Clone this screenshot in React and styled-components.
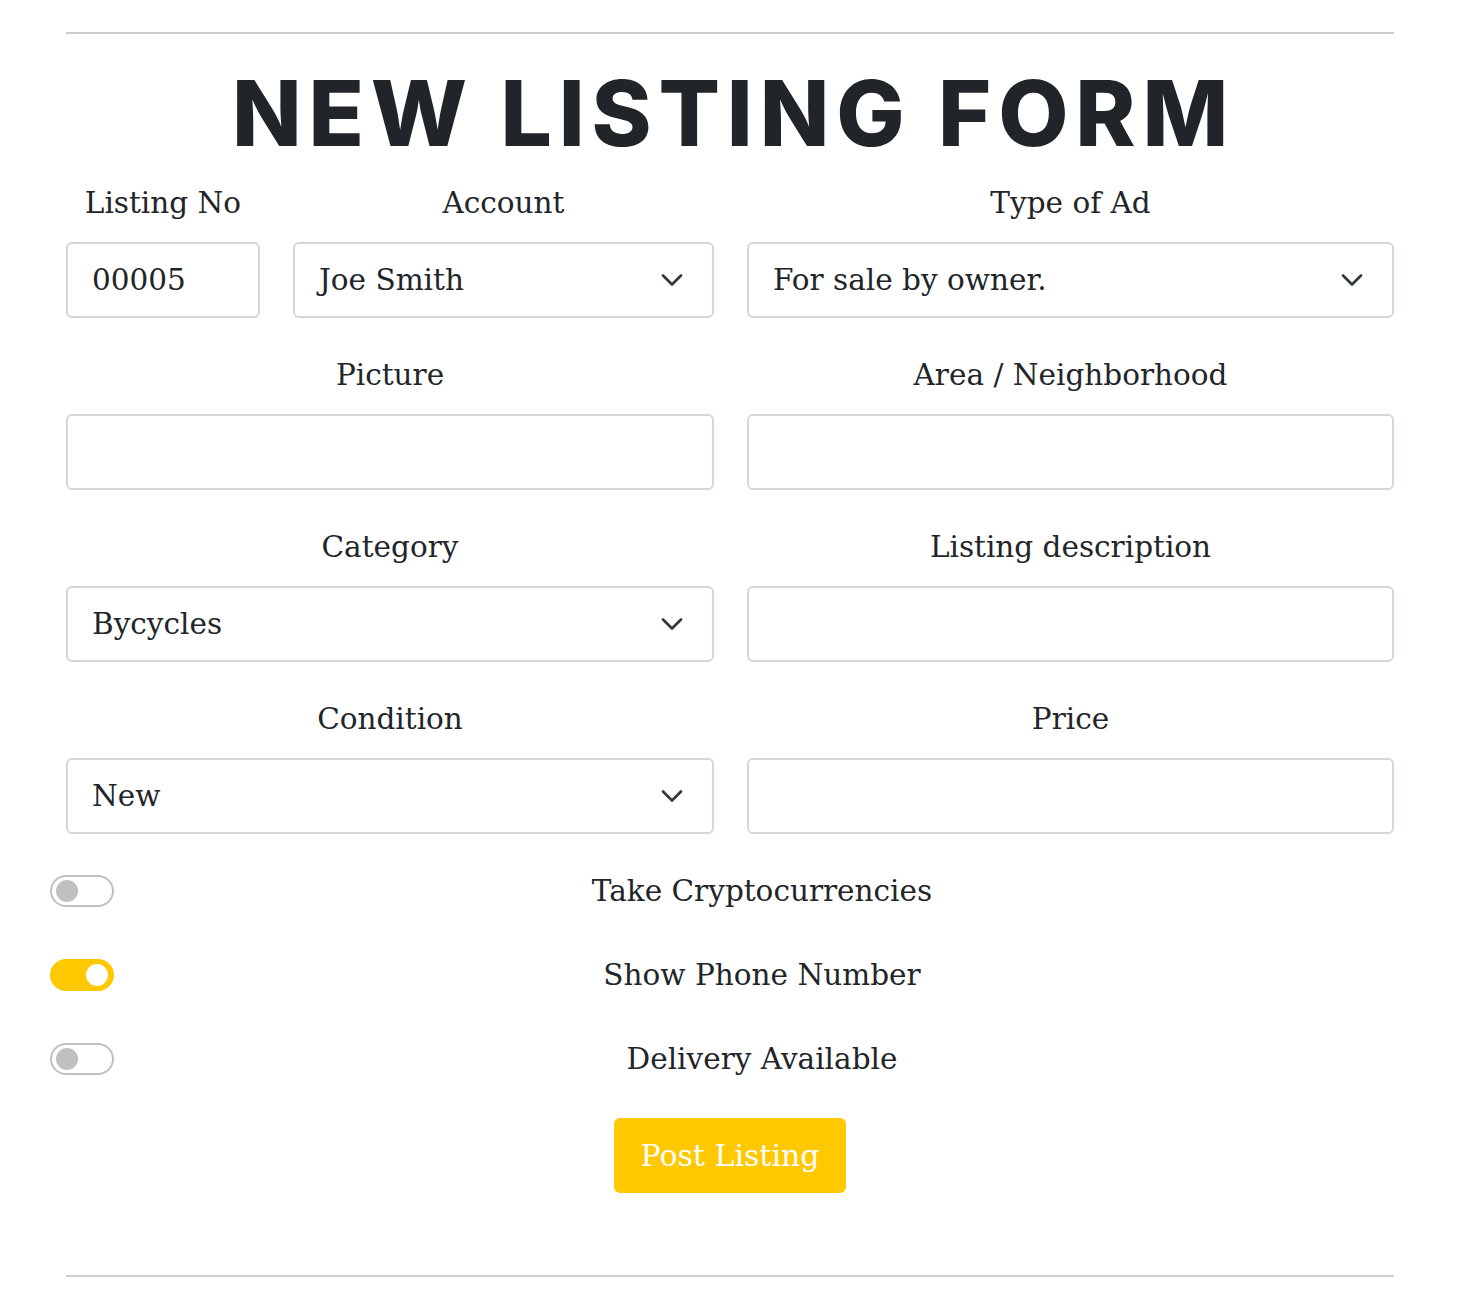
import React from "react";
import styled, { createGlobalStyle } from "styled-components";

const Global = createGlobalStyle`
  html, body { margin: 0; padding: 0; background: #fff; }
  body { font-family: "DejaVu Serif", serif; color: #212529; }
  * { box-sizing: border-box; }
`;

const Page = styled.div`
  width: 1328px;
  margin: 0 auto;
  padding-top: 32px;
  padding-bottom: 28px;
`;

const Rule = styled.hr`
  margin: 0;
  border: 0;
  border-top: 2px solid #cfcfcf;
`;

const Title = styled.h1`
  margin: 0;
  height: 145px;
  display: flex;
  align-items: center;
  justify-content: center;
  font-family: "Inter", "Noto Sans", sans-serif;
  font-weight: 800;
  font-size: 91px;
  letter-spacing: 6.8px;
  padding-left: 7px;
  padding-top: 12px;
  color: #212529;
`;

const Grid = styled.div`
  display: grid;
  grid-template-columns: 194px 421px 647px;
  column-gap: 33px;
  row-gap: 33px;
  & > * { min-width: 0; }
`;

const Field = styled.div`
  display: flex;
  flex-direction: column;
  grid-column: ${(p) => p.$span || "auto"};
`;

const Label = styled.label`
  height: 48px;
  line-height: 48px;
  margin-bottom: 15px;
  text-align: center;
  font-size: 29.5px;
  color: #212529;
  white-space: nowrap;
`;

const Box = styled.div`
  position: relative;
  height: 76px;
  border: 2px solid #d3d7dc;
  border-radius: 6px;
  padding: 0 24px;
  display: flex;
  align-items: center;
  font-size: 29.5px;
  color: #212529;
  background: #fff;
  white-space: nowrap;
`;

const Chevron = styled.svg`
  position: absolute;
  right: 28px;
  top: 50%;
  transform: translateY(-50%);
  width: 24px;
  height: 24px;
`;

const Toggles = styled.div`
  margin: 41px -16px 0;
  display: flex;
  flex-direction: column;
  gap: 52px;
`;

const ToggleRow = styled.div`
  display: flex;
  align-items: center;
  height: 32px;
`;

const Switch = styled.span`
  flex: 0 0 64px;
  width: 64px;
  height: 32px;
  border-radius: 16px;
  border: 2px solid ${(p) => (p.$on ? "#ffc800" : "#c0c0c0")};
  background: ${(p) => (p.$on ? "#ffc800" : "#fff")};
  display: flex;
  align-items: center;
  justify-content: ${(p) => (p.$on ? "flex-end" : "flex-start")};
  padding: 0 4px;
`;

const Knob = styled.span`
  width: 22px;
  height: 22px;
  border-radius: 50%;
  background: ${(p) => (p.$on ? "#fff" : "#c0c0c0")};
`;

const ToggleLabel = styled.span`
  flex: 1;
  text-align: center;
  font-size: 29.5px;
  color: #212529;
`;

const ButtonRow = styled.div`
  display: flex;
  justify-content: center;
  margin-top: 43px;
  margin-bottom: 82px;
`;

const Button = styled.button`
  width: 232px;
  height: 75px;
  border: 0;
  border-radius: 6px;
  background: #ffc800;
  color: #fff;
  font-family: "DejaVu Serif", serif;
  font-size: 30px;
  padding: 0;
`;

const Arrow = () => (
  <Chevron viewBox="0 0 16 16" fill="none">
    <path d="M2 5l6 6 6-6" stroke="#343a40" strokeWidth="1.8" strokeLinecap="round" strokeLinejoin="round" />
  </Chevron>
);

const Toggle = ({ on, label }) => (
  <ToggleRow>
    <Switch $on={on}>
      <Knob $on={on} />
    </Switch>
    <ToggleLabel>{label}</ToggleLabel>
  </ToggleRow>
);

export default function App() {
  return (
    <>
      <Global />
      <Page>
        <Rule />
        <Title>NEW LISTING FORM</Title>
        <Grid>
          <Field>
            <Label>Listing No</Label>
            <Box>00005</Box>
          </Field>
          <Field>
            <Label>Account</Label>
            <Box>
              Joe Smith
              <Arrow />
            </Box>
          </Field>
          <Field>
            <Label>Type of Ad</Label>
            <Box>
              For sale by owner.
              <Arrow />
            </Box>
          </Field>
          <Field $span="1 / 3">
            <Label>Picture</Label>
            <Box />
          </Field>
          <Field>
            <Label>Area / Neighborhood</Label>
            <Box />
          </Field>
          <Field $span="1 / 3">
            <Label>Category</Label>
            <Box>
              Bycycles
              <Arrow />
            </Box>
          </Field>
          <Field>
            <Label>Listing description</Label>
            <Box />
          </Field>
          <Field $span="1 / 3">
            <Label>Condition</Label>
            <Box>
              New
              <Arrow />
            </Box>
          </Field>
          <Field>
            <Label>Price</Label>
            <Box />
          </Field>
        </Grid>
        <Toggles>
          <Toggle label="Take Cryptocurrencies" />
          <Toggle on label="Show Phone Number" />
          <Toggle label="Delivery Available" />
        </Toggles>
        <ButtonRow>
          <Button>Post Listing</Button>
        </ButtonRow>
        <Rule />
      </Page>
    </>
  );
}
